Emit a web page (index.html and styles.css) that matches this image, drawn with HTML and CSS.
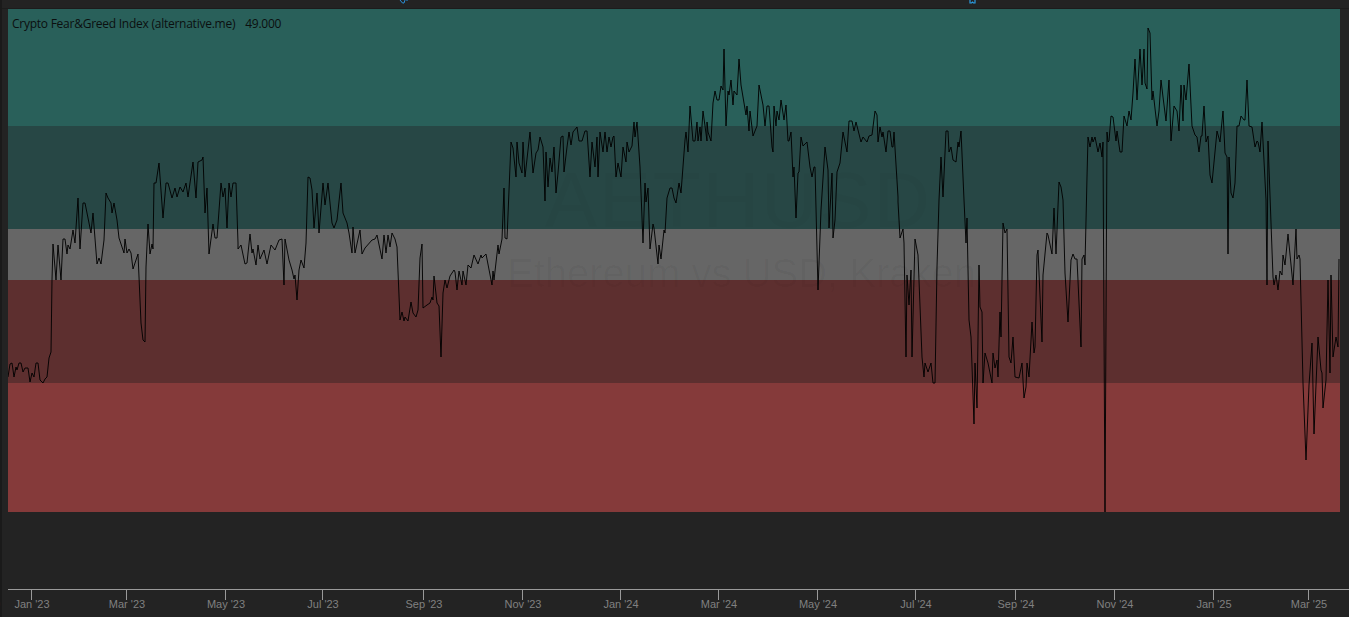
FILE: index.html
```html
<!DOCTYPE html>
<html lang="en">
<head>
<meta charset="utf-8">
<title>Crypto Fear&amp;Greed Index</title>
<link rel="stylesheet" href="styles.css">
</head>
<body>
<div class="page">
  <div class="rail"></div>
  <main class="main">
    <div class="topbar">
      <svg class="clip-mark clip-a" width="12" height="4" viewBox="0 0 12 4"><path d="M2 0 L4.5 3 L6 3 L7 0 M9 0 L9 1" fill="none" stroke="#2b8fd6" stroke-width="1"/></svg>
      <svg class="clip-mark clip-b" width="8" height="4" viewBox="0 0 8 4"><path d="M1 0 V3 H2.500 L3.500 2 L4.500 3 H6 V0" fill="none" stroke="#2b9be0" stroke-width="1.200"/></svg>
    </div>
    <section class="plot">
      <div class="band band-greed"></div>
      <div class="band band-high"></div>
      <div class="band band-neutral"></div>
      <div class="band band-low"></div>
      <div class="band band-fear"></div>
      <div class="mark mark-symbol">AETHUSD</div>
      <div class="mark mark-name">Ethereum vs USD, Kraken</div>
      <svg class="series" viewBox="8 9 1332 503" preserveAspectRatio="none">
        <polyline fill="none" stroke="#000" stroke-opacity=".92" stroke-width="1" stroke-linejoin="miter" points="8,377 10,364 12,363 14,377 16,367 17,370 19,363 21,363 23,372 25,368 28,368 30,382 32,373 34,377 36,363 38,363 40,380 43,383 45,379 47,377 49,358 51,352 52,280 53,244 56,280 58,245 61,280 63,239 65,239 67,254 68,245 70,249 73,230 75,243 78,198 80,249 83,203 85,203 87,213 91,233 93,213 97,264 99,258 101,264 104,240 106,193 108,198 111,203 112,213 114,203 117,220 119,238 124,253 125,239 127,253 129,249 131,253 133,269 138,254 141,323 143,340 145,342 146,267 148,224 150,254 152,244 153,249 154,183 156,183 159,163 163,218 166,183 168,183 172,198 175,188 177,197 180,187 183,192 186,183 188,197 193,162 196,198 198,162 202,160 203,157 205,213 207,188 209,254 213,224 215,238 217,238 221,183 223,197 225,188 227,228 229,183 231,197 233,183 236,183 238,243 238,249 241,245 245,264 247,263 250,234 252,253 253,249 256,265 258,245 260,259 264,250 267,264 271,245 275,250 279,240 282,239 284,285 285,239 289,260 292,270 294,279 295,275 297,300 299,270 301,260 304,268 306,243 308,177 310,178 312,190 314,228 317,193 319,233 323,183 325,205 328,183 332,223 334,228 337,220 341,183 343,213 347,223 349,233 352,253 353,227 355,253 360,230 362,254 365,248 372,240 375,239 377,235 382,259 384,235 386,253 388,235 390,247 392,233 395,239 397,247 400,320 402,312 404,321 405,317 408,321 411,302 413,313 416,317 418,310 420,258 422,244 423,308 427,305 430,303 432,297 433,300 434,276 437,303 439,306 441,357 443,293 445,280 447,288 450,276 454,270 455,272 457,290 459,271 462,285 463,271 466,285 468,265 471,268 474,255 478,264 481,255 482,258 486,254 492,285 493,271 494,280 498,245 499,254 502,239 504,188 505,238 507,239 511,142 513,148 516,177 517,142 519,163 522,173 523,142 525,177 530,132 533,173 536,153 538,150 540,137 543,147 545,201 546,152 548,187 550,158 552,172 554,147 556,193 558,173 561,137 563,136 564,172 567,147 569,132 571,145 573,132 577,127 579,141 582,141 585,131 587,131 590,177 592,142 595,167 597,137 598,177 600,132 603,152 605,132 607,152 609,137 611,147 613,137 614,136 616,177 618,163 621,177 623,147 626,162 627,142 629,152 632,146 634,122 635,137 637,122 640,167 643,243 645,183 646,202 648,188 650,249 653,224 654,228 658,264 659,245 661,259 664,230 665,233 667,198 670,188 672,188 674,198 676,203 679,183 681,193 685,140 686,132 688,152 690,106 693,141 695,141 697,122 698,141 700,127 701,141 703,111 707,141 707,122 708,132 711,141 713,103 715,91 717,100 719,100 721,86 723,90 724,49 726,126 728,91 729,95 731,80 733,105 734,91 737,95 739,59 741,85 746,115 747,106 749,131 750,111 753,136 757,126 759,85 763,105 765,126 767,106 769,106 772,147 773,152 774,106 776,126 777,111 779,120 781,100 784,120 786,105 788,141 789,141 791,132 793,177 794,167 796,218 798,173 799,172 801,137 803,146 807,142 810,167 812,177 814,167 815,167 818,290 821,210 825,147 828,170 829,228 832,173 833,238 835,220 837,172 840,163 843,132 847,152 849,121 852,121 854,131 856,122 861,142 863,137 867,142 869,136 872,135 875,111 877,115 878,142 880,127 882,137 883,132 886,152 888,131 890,131 892,147 893,147 894,132 898,197 898,202 900,238 903,229 904,243 906,357 907,275 909,305 911,270 912,357 915,239 918,255 922,357 924,377 925,363 928,372 931,363 933,383 935,383 937,267 939,200 941,157 943,197 946,131 948,131 949,152 951,147 953,160 956,162 958,142 959,147 961,131 964,200 966,243 967,218 969,320 971,337 974,424 975,363 977,408 979,265 980,307 982,312 983,383 985,353 988,363 992,383 993,353 995,368 997,360 998,377 1000,312 1001,337 1003,223 1005,233 1007,229 1009,357 1011,363 1013,337 1015,377 1019,378 1022,363 1024,398 1026,387 1027,363 1029,377 1032,322 1034,353 1035,347 1037,255 1038,250 1042,342 1043,275 1047,233 1048,235 1052,254 1054,208 1056,254 1059,182 1061,187 1063,200 1065,273 1068,322 1071,260 1073,254 1075,259 1077,259 1081,347 1082,259 1084,255 1085,265 1087,177 1088,137 1090,147 1092,137 1093,142 1095,137 1098,152 1100,143 1102,157 1103,142 1105,512 1107,132 1108,142 1109,141 1111,116 1113,117 1116,141 1117,131 1120,152 1122,152 1124,116 1127,126 1129,111 1131,120 1133,93 1135,59 1137,100 1140,49 1142,85 1144,49 1145,83 1147,89 1148,28 1150,33 1152,100 1153,91 1157,126 1159,111 1161,80 1163,97 1166,121 1169,80 1171,141 1174,106 1177,111 1179,131 1181,85 1183,121 1184,85 1186,100 1189,64 1192,126 1195,135 1197,137 1199,152 1201,136 1202,136 1204,106 1206,142 1208,136 1210,175 1212,183 1217,131 1220,142 1223,111 1225,153 1227,157 1228,254 1229,157 1231,193 1233,198 1235,183 1237,126 1239,126 1241,116 1244,120 1245,120 1247,80 1249,126 1252,127 1255,147 1257,141 1258,142 1260,152 1262,122 1266,200 1267,285 1268,141 1273,277 1274,285 1276,275 1278,290 1280,271 1282,275 1283,255 1285,265 1288,234 1293,285 1296,229 1297,259 1299,255 1300,259 1303,383 1306,460 1309,385 1312,343 1314,434 1316,385 1318,337 1321,370 1322,373 1323,408 1326,380 1328,280 1330,373 1331,275 1333,357 1336,337 1338,347 1339,259"/>
      </svg>
      <div class="legend"><span>Crypto Fear&amp;Greed Index (alternative.me)</span><span>49.000</span></div>
    </section>
    <div class="spacer"></div>
    <footer class="axis">
      <div class="tick-label tick-clip">0</div>
      <div class="tick" style="left:31px"><i></i><span>Jan '23</span></div>
      <div class="tick" style="left:126px"><i></i><span>Mar '23</span></div>
      <div class="tick" style="left:225px"><i></i><span>May '23</span></div>
      <div class="tick" style="left:322px"><i></i><span>Jul '23</span></div>
      <div class="tick" style="left:423px"><i></i><span>Sep '23</span></div>
      <div class="tick" style="left:522px"><i></i><span>Nov '23</span></div>
      <div class="tick" style="left:620px"><i></i><span>Jan '24</span></div>
      <div class="tick" style="left:718px"><i></i><span>Mar '24</span></div>
      <div class="tick" style="left:817px"><i></i><span>May '24</span></div>
      <div class="tick" style="left:915px"><i></i><span>Jul '24</span></div>
      <div class="tick" style="left:1015px"><i></i><span>Sep '24</span></div>
      <div class="tick" style="left:1114px"><i></i><span>Nov '24</span></div>
      <div class="tick" style="left:1213px"><i></i><span>Jan '25</span></div>
      <div class="tick" style="left:1308px"><i></i><span>Mar '25</span></div>
    </footer>
  </main>
</div>
</body>
</html>
```
FILE: styles.css
```css
* { box-sizing: border-box; }
html, body { margin: 0; height: 100%; overflow: hidden; background: #232323; }
.page { display: flex; width: 1349px; height: 617px; }
.rail { width: 2px; background: #1a1a1a; flex: none; }
.main { position: relative; flex: 1; display: flex; flex-direction: column; min-width: 0; }
.topbar { height: 9px; flex: none; position: relative; background: #232323; border-bottom: 1px solid #1c1c1c; }
.clip-mark { position: absolute; top: 0; }
.clip-a { left: 396px; }
.clip-b { left: 967px; }
.plot { position: relative; flex: none; width: 1332px; height: 503px; margin-left: 6px; display: flex; flex-direction: column; overflow: hidden; }
.band { flex: none; }
.band-greed { height: 117px; background: #29605a; }
.band-high { height: 103px; background: #274745; }
.band-neutral { height: 51px; background: #666666; }
.band-low { height: 103px; background: #5d2f2f; }
.band-fear { height: 129px; background: #853a3a; }
.mark { position: absolute; font-family: "Liberation Sans", Arial, sans-serif; white-space: nowrap; }
.mark-symbol { left: 537px; top: 151px; font-size: 78px; line-height: 80px; letter-spacing: 2px; color: rgba(0, 0, 0, .025); }
.mark-name { left: 499px; top: 242px; font-size: 40px; line-height: 44px; color: rgba(0, 0, 0, .03); }
.series { position: absolute; inset: 0; width: 100%; height: 100%; display: block; }
.legend { position: absolute; left: 4px; top: 7px; display: flex; gap: 10px; font-family: "Open Sans", sans-serif; font-size: 12px; letter-spacing: -.25px; line-height: 16px; color: #0b0f0f; white-space: nowrap; }
.spacer { flex: 1; }
.axis { position: relative; flex: none; height: 28px; margin-left: 6px; border-top: 1px solid #9a9a9a; font-family: "Liberation Sans", Arial, sans-serif; font-size: 11px; color: #808080; }
.tick { position: absolute; top: 0; width: 0; margin-left: -8px; }
.tick i { position: absolute; left: 0; top: 0; width: 1px; height: 10px; background: #9a9a9a; }
.tick span { position: absolute; top: 7px; left: 1px; transform: translateX(-50%); line-height: 14px; white-space: nowrap; }
.tick-label { position: absolute; line-height: 14px; }
.tick-clip { left: -14px; top: 7px; color: #555; }
```
